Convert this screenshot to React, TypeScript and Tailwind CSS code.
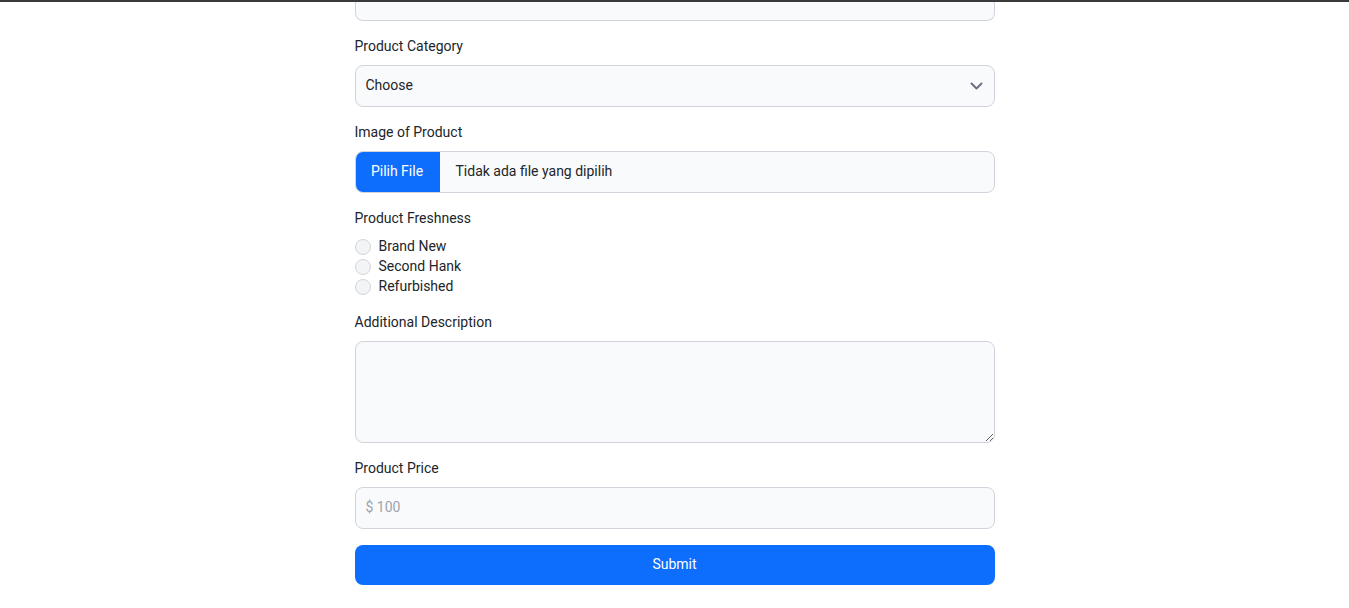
import React from "react";

const font = { fontFamily: "Roboto, 'Liberation Sans', sans-serif" };

function Label({ children }: { children: React.ReactNode }) {
  return <label className="mb-2 block text-[14px] leading-[21px] text-[#212529]">{children}</label>;
}

export default function App() {
  const radios = ["Brand New", "Second Hank", "Refurbished"];
  return (
    <div className="min-h-[608px] w-full border-t-2 border-[#3a3a3a] bg-white" style={font}>
      <div className="mx-auto w-[640px]">
        <div className="h-[19px] rounded-b-lg border-x border-b border-[#d1d5db] bg-[#f9fafb]" />
        <div className="mt-[15px]">
          <Label>Product Category</Label>
          <div className="flex h-[42px] items-center justify-between rounded-lg border border-[#d1d5db] bg-[#f9fafb] pl-[10px] pr-[11px]">
            <span className="mb-[2px] text-[14px] text-[#212529]">Choose</span>
            <svg width="13" height="8" viewBox="0 0 13 8" fill="none">
              <path d="M1.5 1.5 L6.5 6.5 L11.5 1.5" stroke="#6b7280" strokeWidth="2" strokeLinecap="round" strokeLinejoin="round" />
            </svg>
          </div>
        </div>
        <div className="mt-[15px]">
          <Label>Image of Product</Label>
          <div className="flex h-[42px] items-stretch overflow-hidden rounded-lg border border-[#d1d5db] bg-[#f9fafb]">
            <div className="-my-px -ml-px flex w-[85px] items-center justify-center rounded-l-lg bg-[#0d6efd] pb-[2px] text-[14px] text-white">
              Pilih File
            </div>
            <div className="flex items-center pb-[2px] pl-[16px] text-[14px] text-[#212529]">Tidak ada file yang dipilih</div>
          </div>
        </div>
        <div className="mt-[15px]">
          <Label>Product Freshness</Label>
          <div className="flex flex-col">
            {radios.map((r) => (
              <div key={r} className="flex h-5 items-center gap-2">
                <span className="h-4 w-4 rounded-full border border-[#d1d5db] bg-[#f3f4f6]" />
                <span className="mb-[2px] text-[14px] leading-5 text-[#212529]">{r}</span>
              </div>
            ))}
          </div>
        </div>
        <div className="mt-[15px]">
          <Label>Additional Description</Label>
          <textarea className="block h-[102px] w-full rounded-lg border border-[#d1d5db] bg-[#f9fafb] px-[10px] py-2 text-[14px] outline-none" />
        </div>
        <div className="mt-[15px]">
          <Label>Product Price</Label>
          <input
            placeholder="$ 100"
            className="block h-[42px] w-full rounded-lg border border-[#d1d5db] bg-[#f9fafb] px-[10px] pb-[2px] text-[14px] text-[#212529] outline-none placeholder:text-[#9ca3af]"
          />
        </div>
        <button className="mt-4 flex h-10 w-full items-center justify-center rounded-lg bg-[#0d6efd] pb-[2px] text-[14px] text-white">
          Submit
        </button>
      </div>
    </div>
  );
}
